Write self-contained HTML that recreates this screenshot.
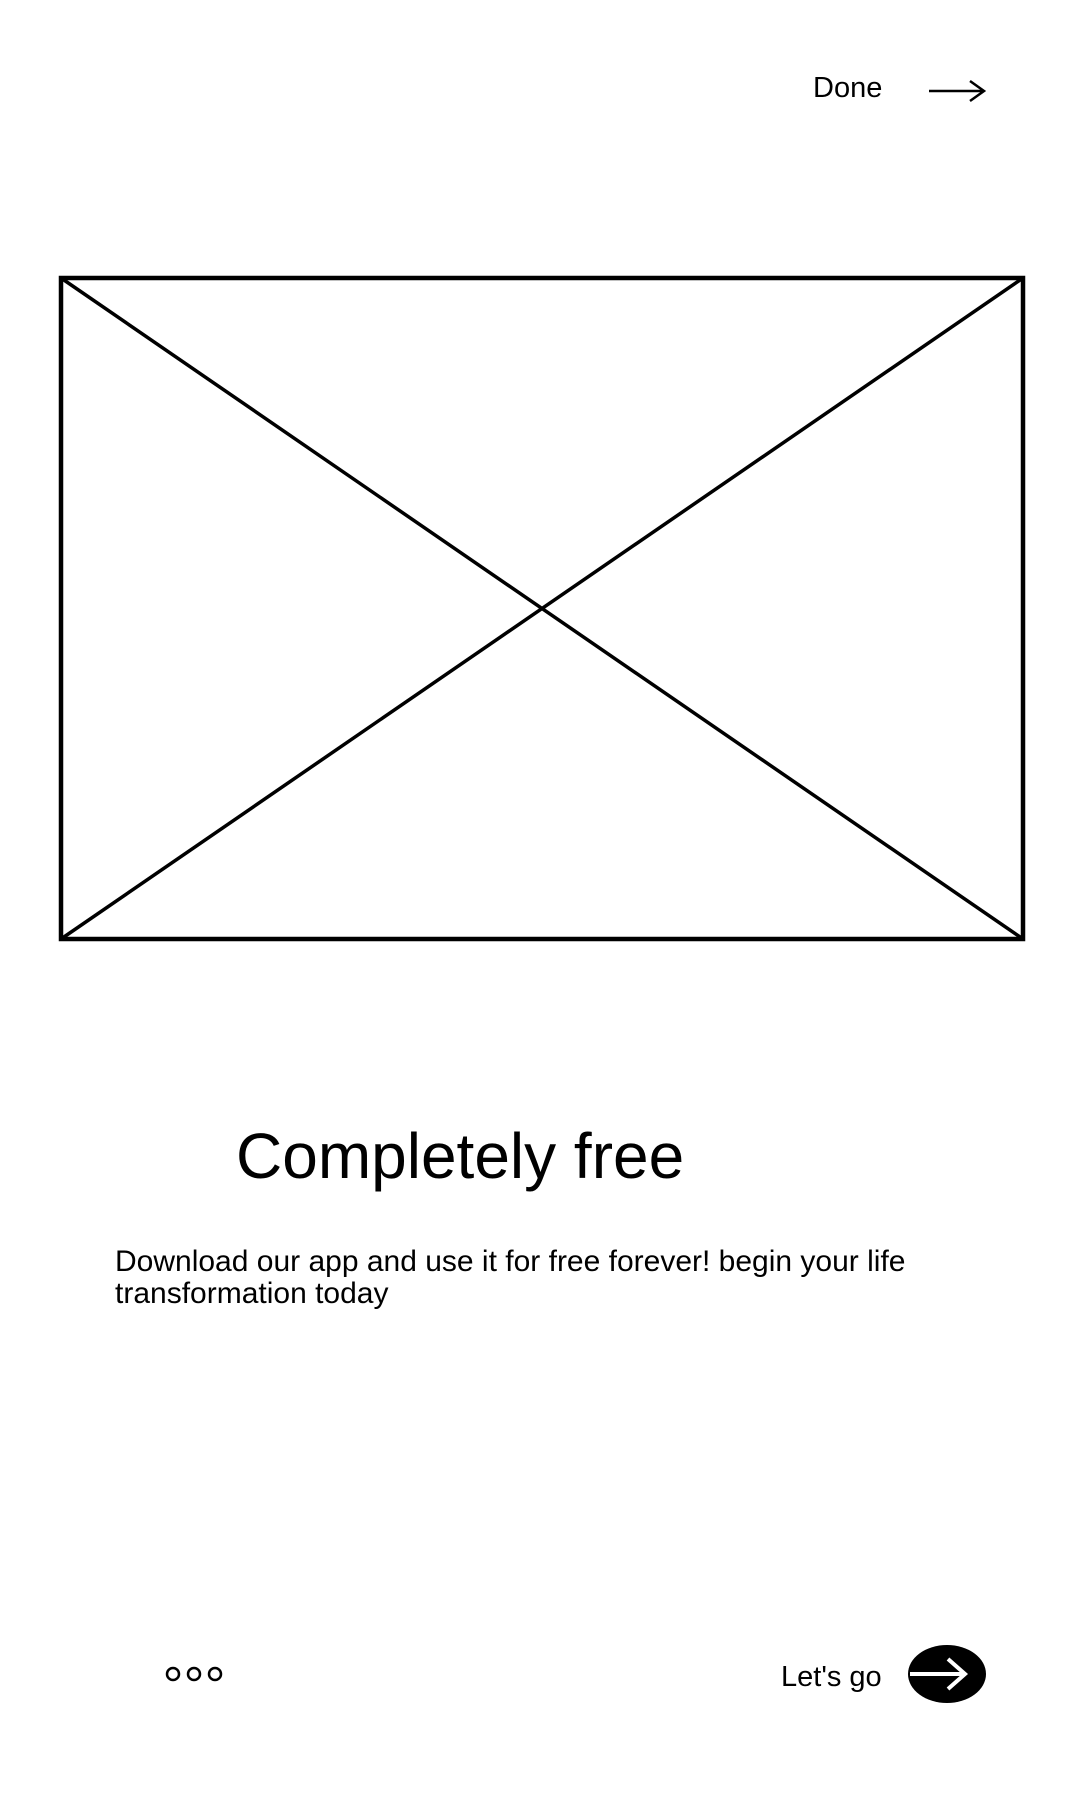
<!DOCTYPE html>
<html><head><meta charset="utf-8"><style>
html,body{margin:0;padding:0;background:#fff;width:1080px;height:1800px;overflow:hidden;font-family:"Liberation Sans",sans-serif;color:#000}
.a{position:absolute;white-space:nowrap}
</style></head><body>
<div class="a" style="left:813px;top:71px;font-size:29px;line-height:34px">Done</div>
<svg class="a" style="left:0;top:0" width="1080" height="1800">
<g stroke="#000" fill="none">
<path d="M929 91H983M970 81L984 91L970 101" stroke-width="2.5"/>
<rect x="61" y="278" width="962" height="661" stroke-width="4.5"/>
<path d="M61 278L1023 939M1023 278L61 939" stroke-width="3.5"/>
<circle cx="173" cy="1674" r="6" stroke-width="2.5"/>
<circle cx="194" cy="1674" r="6" stroke-width="2.5"/>
<circle cx="215" cy="1674" r="6" stroke-width="2.5"/>
</g>
<ellipse cx="947" cy="1674" rx="39" ry="29" fill="#000"/>
<path d="M910 1674H964M948 1659L965 1674L948 1689" stroke="#fff" stroke-width="4" fill="none"/>
</svg>
<div class="a" style="left:236px;top:1116px;font-size:64px;line-height:80px">Completely free</div>
<div class="a" style="left:115px;top:1246px;font-size:30px;line-height:32px">Download our app and use it for free forever! begin your life<br>transformation today</div>
<div class="a" style="left:781px;top:1660px;font-size:29px;line-height:34px">Let's go</div>
</body></html>
